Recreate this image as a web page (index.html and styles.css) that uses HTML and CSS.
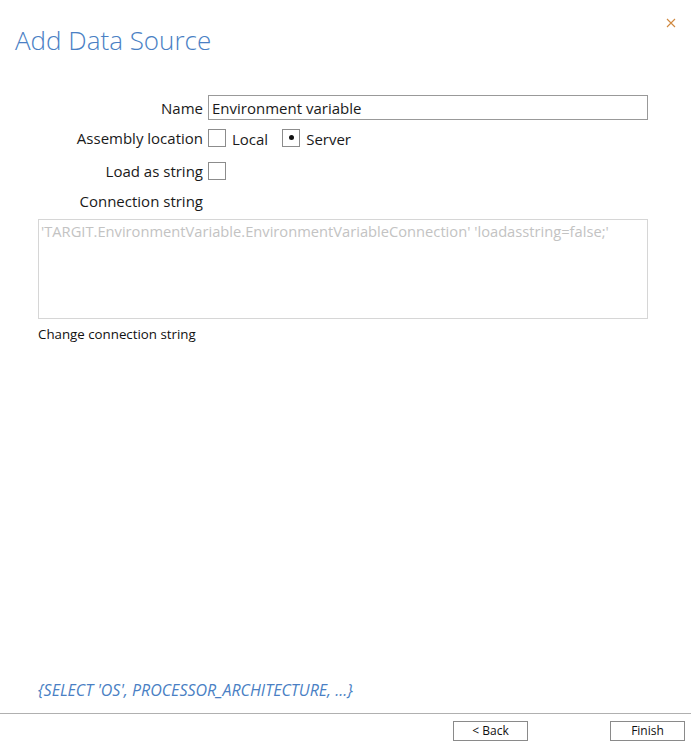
FILE: index.html
```html
<!DOCTYPE html>
<html lang="en">
<head>
    <meta charset="UTF-8">
    <meta name="viewport" content="width=device-width, initial-scale=1.0">
    <title>Add Data Source</title>
    <link rel="stylesheet" href="styles.css">
</head>
<body>
    <div class="dialog">
        <h1 class="dialog-title">Add Data Source</h1>
        <button class="close-btn" type="button" aria-label="Close">
            <svg width="10" height="10" viewBox="0 0 10 10">
                <path d="M1 1 L9 9 M9 1 L1 9" stroke="#d0893f" stroke-width="1.1" fill="none"/>
            </svg>
        </button>

        <div class="form">
            <div class="row row-name">
                <label class="row-label" for="name">Name</label>
                <input class="text-input" type="text" id="name" value="Environment variable">
            </div>

            <div class="row row-location">
                <span class="row-label">Assembly location</span>
                <div class="options">
                    <span class="box"></span>
                    <span class="option-text">Local</span>
                    <span class="box box-checked"><span class="dot"></span></span>
                    <span class="option-text">Server</span>
                </div>
            </div>

            <div class="row row-load">
                <span class="row-label">Load as string</span>
                <span class="box"></span>
            </div>

            <div class="row row-conn">
                <span class="row-label">Connection string</span>
            </div>

            <div class="conn-box">'TARGIT.EnvironmentVariable.EnvironmentVariableConnection' 'loadasstring=false;'</div>
            <div class="change-link">Change connection string</div>
        </div>

        <div class="query-hint">{SELECT 'OS', PROCESSOR_ARCHITECTURE, ...}</div>

        <div class="footer">
            <button class="footer-btn" type="button">&lt; Back</button>
            <button class="footer-btn" type="button">Finish</button>
        </div>
    </div>
</body>
</html>
```

FILE: styles.css
```css
body {
    margin: 0;
    font-family: "Open Sans", "Noto Sans", sans-serif;
    background: #ffffff;
    color: #1a1a1a;
}

.dialog {
    position: relative;
    width: 691px;
    height: 746px;
    display: flex;
    flex-direction: column;
    overflow: hidden;
}

.dialog-title {
    margin: 23px 0 0 15px;
    font-size: 26px;
    font-weight: 300;
    line-height: 34px;
    color: #4a7fc4;
}

.close-btn {
    position: absolute;
    top: 17px;
    right: 14px;
    width: 12px;
    height: 12px;
    padding: 0;
    border: none;
    background: none;
    display: flex;
    align-items: center;
    justify-content: center;
}

.form {
    margin-top: 38px;
    display: flex;
    flex-direction: column;
}

.row {
    display: flex;
    align-items: center;
    gap: 5px;
    height: 25px;
    font-size: 15px;
}

.row-label {
    width: 203px;
    text-align: right;
    flex-shrink: 0;
}

.row-location {
    margin-top: 5px;
}

.row-load {
    margin-top: 8px;
}

.row-conn {
    margin-top: 5px;
}

.text-input {
    width: 440px;
    height: 25px;
    box-sizing: border-box;
    border: 1px solid #999999;
    padding: 0 3px;
    margin: 0;
    font-family: inherit;
    font-size: 15px;
    color: #1a1a1a;
}

.options {
    display: flex;
    align-items: center;
}

.box {
    width: 18px;
    height: 18px;
    box-sizing: border-box;
    border: 1px solid #8c8c8c;
    display: flex;
    align-items: center;
    justify-content: center;
}

.dot {
    width: 5px;
    height: 5px;
    border-radius: 50%;
    background: #111111;
}

.option-text {
    margin: 2px 14px 0 6px;
}

.conn-box {
    margin: 6px 0 0 38px;
    width: 610px;
    height: 100px;
    box-sizing: border-box;
    border: 1px solid #d6d6d6;
    padding: 1px 2px;
    font-size: 14.7px;
    color: #c3c3c3;
    white-space: nowrap;
    overflow: hidden;
}

.change-link {
    margin: 6px 0 0 38px;
    font-size: 13.3px;
    color: #111111;
}

.query-hint {
    margin: auto 0 0 38px;
    padding-bottom: 12px;
    font-size: 16px;
    font-style: italic;
    color: #4a7fc4;
}

.footer {
    border-top: 1px solid #b0b0b0;
    display: flex;
    justify-content: flex-end;
    gap: 82px;
    padding: 7px 6px 5px 0;
}

.footer-btn {
    width: 75px;
    height: 20px;
    box-sizing: border-box;
    border: 1px solid #8a8a8a;
    background: #ffffff;
    font-family: inherit;
    font-size: 12px;
    line-height: 18px;
    padding: 0;
    color: #111111;
}
```
